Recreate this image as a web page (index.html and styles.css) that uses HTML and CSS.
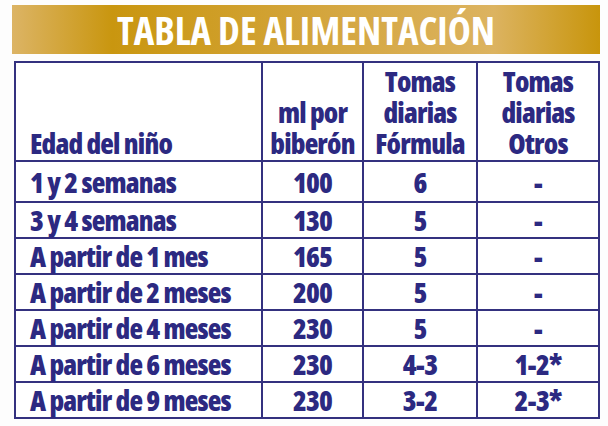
FILE: index.html
```html
<!DOCTYPE html>
<html lang="es">
<head>
<meta charset="utf-8">
<title>Tabla de alimentación</title>
<link rel="stylesheet" href="styles.css">
</head>
<body>
<div class="page">
  <div class="band"><h1 class="title">TABLA DE ALIMENTACIÓN</h1></div>
  <table class="feed">
    <colgroup>
      <col class="c1"><col class="c2"><col class="c3"><col class="c4">
    </colgroup>
    <thead>
      <tr class="head">
        <th class="left">Edad del niño</th>
        <th>ml por<br>biberón</th>
        <th>Tomas<br>diarias<br>Fórmula</th>
        <th>Tomas<br>diarias<br>Otros</th>
      </tr>
    </thead>
    <tbody>
      <tr class="first"><td class="left">1 y 2 semanas</td><td>100</td><td>6</td><td>-</td></tr>
      <tr><td class="left">3 y 4 semanas</td><td>130</td><td>5</td><td>-</td></tr>
      <tr><td class="left">A partir de 1 mes</td><td>165</td><td>5</td><td>-</td></tr>
      <tr><td class="left">A partir de 2 meses</td><td>200</td><td>5</td><td>-</td></tr>
      <tr><td class="left">A partir de 4 meses</td><td>230</td><td>5</td><td>-</td></tr>
      <tr><td class="left">A partir de 6 meses</td><td>230</td><td>4-3</td><td>1-2*</td></tr>
      <tr><td class="left">A partir de 9 meses</td><td>230</td><td>3-2</td><td>2-3*</td></tr>
    </tbody>
  </table>
</div>
</body>
</html>
```
FILE: styles.css
```css
html, body {
  margin: 0;
  padding: 0;
  background: #fdfdfd;
}
.page {
  width: 608px;
  height: 426px;
  padding-top: 5px;
  box-sizing: border-box;
  overflow: hidden;
}
.band {
  margin-left: 12px;
  width: 588px;
  height: 49px;
  background: linear-gradient(90deg, #dcb465 0%, #c9960f 17%, #d3a43a 50%, #dcb360 82%, #c8950c 100%);
  display: flex;
  align-items: center;
  justify-content: center;
}
.title {
  margin: 0;
  color: #ffffff;
  font-family: "Open Sans", "DejaVu Sans Condensed", sans-serif;
  font-stretch: 78%;
  font-weight: 700;
  font-size: 39px;
  line-height: 1;
  white-space: nowrap;
}
.feed {
  margin-top: 7px;
  margin-left: 14px;
  border-collapse: collapse;
  table-layout: fixed;
  width: 584px;
  background: #ffffff;
  color: #2c2981;
  font-family: "Open Sans", "DejaVu Sans Condensed", sans-serif;
  font-stretch: 75%;
  font-weight: 800;
  font-size: 28px;
  letter-spacing: -0.8px;
  white-space: nowrap;
}
.c1 { width: 247px; }
.c2 { width: 101px; }
.c3 { width: 114px; }
.c4 { width: 122px; }
.feed th, .feed td {
  border: 2px solid #34317f;
  padding: 0;
  text-align: center;
  vertical-align: middle;
  font-weight: 800;
  line-height: 30px;
}
.feed th {
  vertical-align: bottom;
  padding-bottom: 1px;
  line-height: 31px;
}
.feed .left {
  text-align: left;
  padding-left: 14px;
}
.head { height: 99px; }
.feed tbody tr { height: 36px; }
.feed tbody tr.first { height: 41px; }
```
